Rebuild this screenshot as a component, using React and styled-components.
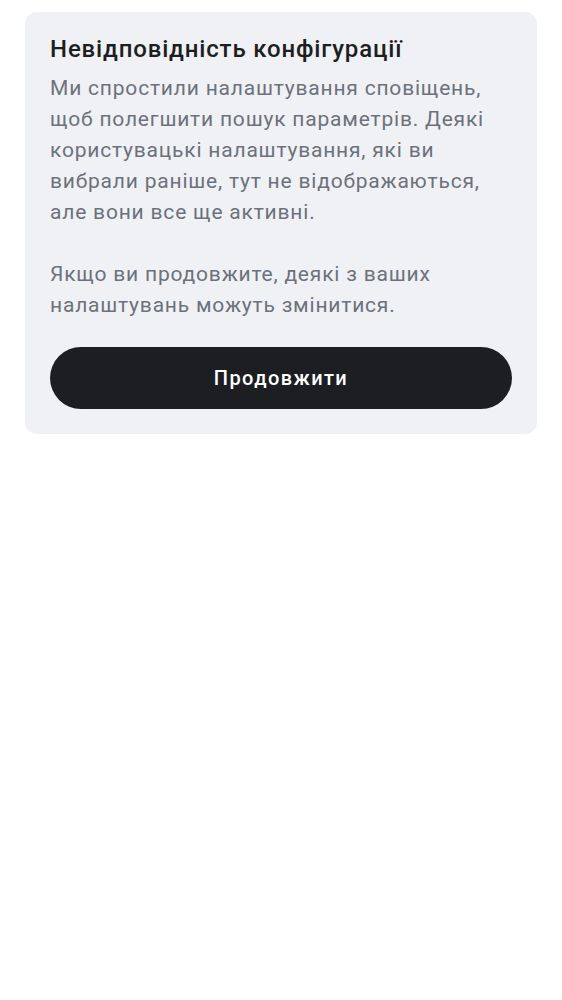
import React from 'react';
import styled, { createGlobalStyle } from 'styled-components';

const GlobalStyle = createGlobalStyle`
    body {
        margin: 0;
        background: #ffffff;
        font-family: Roboto, "Noto Sans", sans-serif;
    }
`;

const Page = styled.div`
    padding: 12px 25px;
`;

const Card = styled.section`
    background-color: #f0f1f5;
    border-radius: 12px;
    padding: 22px 25px 25px;
    display: flex;
    flex-direction: column;
`;

const Title = styled.h2`
    margin: 0;
    font-size: 24px;
    line-height: 30px;
    font-weight: 500;
    letter-spacing: 0.85px;
    color: #1d1e22;
`;

const Text = styled.p`
    margin: ${props => (props.first ? '9px' : '31px')} 0 0;
    font-size: 21px;
    line-height: 31px;
    font-weight: 400;
    letter-spacing: 0.8px;
    color: #6c717b;
`;

const Button = styled.button`
    margin-top: 26px;
    height: 62px;
    border: none;
    border-radius: 31px;
    background-color: #1d1e22;
    color: #ffffff;
    font-family: Roboto, "Noto Sans", sans-serif;
    font-size: 20px;
    font-weight: 500;
    letter-spacing: 1.4px;
    cursor: pointer;
`;

const App = () => (
    <Page>
        <GlobalStyle />
        <Card>
            <Title>Невідповідність конфігурації</Title>
            <Text first>
                Ми спростили налаштування сповіщень, щоб полегшити пошук параметрів. Деякі
                користувацькі налаштування, які ви вибрали раніше, тут не відображаються,
                але вони все ще активні.
            </Text>
            <Text>
                Якщо ви продовжите, деякі з ваших налаштувань можуть змінитися.
            </Text>
            <Button>Продовжити</Button>
        </Card>
    </Page>
);

export default App;
